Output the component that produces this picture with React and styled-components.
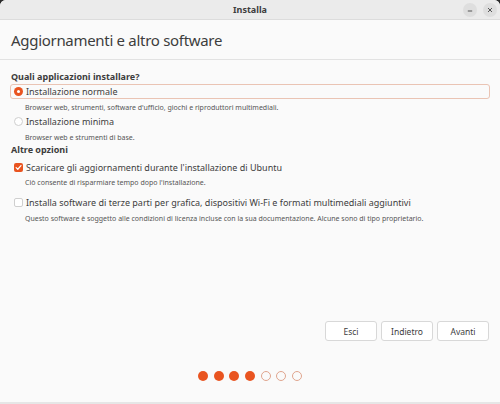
import React from "react";
import styled, { createGlobalStyle } from "styled-components";

const GlobalStyle = createGlobalStyle`
  html, body {
    margin: 0;
    padding: 0;
    background: #2b2b2b;
  }
  body {
    font-family: "Noto Sans", "Open Sans", sans-serif;
    color: #3d3d3d;
  }
`;

const Window = styled.div`
  width: 500px;
  height: 404px;
  background: #fafafa;
  border-radius: 6px 6px 0 0;
  overflow: hidden;
  display: flex;
  flex-direction: column;
`;

const TitleBar = styled.div`
  height: 19px;
  flex: none;
  background: #ebebeb;
  border-bottom: 1px solid #dcdcdc;
  display: flex;
  align-items: center;
  justify-content: center;
  position: relative;
  font-size: 9px;
  font-weight: 700;
  color: #3d3d3d;
`;

const WinButtons = styled.div`
  position: absolute;
  right: 3px;
  top: 3px;
  display: flex;
  gap: 6px;
`;

const WinButton = styled.div`
  width: 14px;
  height: 14px;
  border-radius: 50%;
  background: #dedede;
  display: flex;
  align-items: center;
  justify-content: center;
`;

const Header = styled.div`
  height: 39px;
  flex: none;
  border-bottom: 1px solid #e2e2e2;
  display: flex;
  align-items: center;
  padding-left: 11px;
  font-size: 15px;
  letter-spacing: -0.3px;
  color: #3d3d3d;
`;

const Body = styled.div`
  flex: 1;
  display: flex;
  flex-direction: column;
  padding: 10px 10px 0 10px;
`;

const SectionTitle = styled.div`
  font-size: 9px;
  font-weight: 700;
  height: ${(p) => p.$h || 14}px;
  line-height: ${(p) => p.$h || 14}px;
  padding-left: 1px;
`;

const OptionRow = styled.div`
  display: flex;
  align-items: center;
  gap: 3px;
  height: 15px;
  margin-top: ${(p) => p.$mt || 0}px;
  padding-left: 3px;
  border: 1px solid ${(p) => (p.$focused ? "#eac4b4" : "transparent")};
  border-radius: 3px;
  box-sizing: border-box;
  font-size: 9px;
  color: #3d3d3d;
`;

const Radio = styled.span`
  width: 9px;
  height: 9px;
  border-radius: 50%;
  box-sizing: border-box;
  flex: none;
  background: ${(p) => (p.$on ? "#e95420" : "#fff")};
  border: ${(p) => (p.$on ? "none" : "1px solid #cfcfcf")};
  display: flex;
  align-items: center;
  justify-content: center;
  &::after {
    content: "";
    display: ${(p) => (p.$on ? "block" : "none")};
    width: 3px;
    height: 3px;
    border-radius: 50%;
    background: #fff;
  }
`;

const Check = styled.span`
  width: 9px;
  height: 9px;
  border-radius: 2px;
  box-sizing: border-box;
  flex: none;
  background: ${(p) => (p.$on ? "#e95420" : "#fff")};
  border: ${(p) => (p.$on ? "none" : "1px solid #cfcfcf")};
  display: flex;
  align-items: center;
  justify-content: center;
`;

const Desc = styled.div`
  box-sizing: border-box;
  font-size: 7px;
  color: #555;
  padding: 2px 0 0 15px;
  height: ${(p) => p.$h || 15}px;
  line-height: ${(p) => (p.$h || 15) - 2}px;
  white-space: nowrap;
`;

const Spacer = styled.div`
  flex: 1;
`;

const ButtonRow = styled.div`
  display: flex;
  justify-content: flex-end;
  gap: 4px;
  padding-right: 1px;
`;

const Button = styled.button`
  width: 52px;
  height: 20px;
  border: 1px solid #d8d8d8;
  border-radius: 3px;
  background: #fff;
  font-family: inherit;
  font-size: 8.5px;
  color: #3d3d3d;
  padding: 0;
`;

const Dots = styled.div`
  display: flex;
  justify-content: center;
  gap: 5.6px;
  margin-top: 30px;
  margin-bottom: 21px;
`;

const Dot = styled.span`
  width: 10px;
  height: 10px;
  border-radius: 50%;
  box-sizing: border-box;
  background: ${(p) => (p.$on ? "#e95420" : "transparent")};
  border: ${(p) => (p.$on ? "none" : "1px solid #e0a58e")};
`;

const BottomLine = styled.div`
  height: 2px;
  background: #e6e6e6;
  flex: none;
`;

const CheckMark = () => (
  <svg width="7" height="7" viewBox="0 0 8 8">
    <path
      d="M1.3 4.2 L3.2 6 L6.8 1.8"
      fill="none"
      stroke="#fff"
      strokeWidth="1.4"
      strokeLinecap="round"
      strokeLinejoin="round"
    />
  </svg>
);

export default function App() {
  const steps = [true, true, true, true, false, false, false];
  return (
    <>
      <GlobalStyle />
      <Window>
        <TitleBar>
          Installa
          <WinButtons>
            <WinButton>
              <svg width="6" height="6" viewBox="0 0 6 6">
                <path d="M0.8 4 H5.2" stroke="#555" strokeWidth="1" />
              </svg>
            </WinButton>
            <WinButton>
              <svg width="6" height="6" viewBox="0 0 6 6">
                <path d="M1 1 L5 5 M5 1 L1 5" stroke="#555" strokeWidth="1" />
              </svg>
            </WinButton>
          </WinButtons>
        </TitleBar>
        <Header>Aggiornamenti e altro software</Header>
        <Body>
          <SectionTitle>Quali applicazioni installare?</SectionTitle>
          <OptionRow $focused>
            <Radio $on />
            Installazione normale
          </OptionRow>
          <Desc>Browser web, strumenti, software d'ufficio, giochi e riproduttori multimediali.</Desc>
          <OptionRow>
            <Radio />
            Installazione minima
          </OptionRow>
          <Desc>Browser web e strumenti di base.</Desc>
          <SectionTitle $h={11}>Altre opzioni</SectionTitle>
          <OptionRow $mt={5}>
            <Check $on>
              <CheckMark />
            </Check>
            Scaricare gli aggiornamenti durante l'installazione di Ubuntu
          </OptionRow>
          <Desc $h={14}>Ciò consente di risparmiare tempo dopo l'installazione.</Desc>
          <OptionRow $mt={6}>
            <Check />
            Installa software di terze parti per grafica, dispositivi Wi-Fi e formati multimediali aggiuntivi
          </OptionRow>
          <Desc>
            Questo software è soggetto alle condizioni di licenza incluse con la sua documentazione. Alcune sono di tipo proprietario.
          </Desc>
          <Spacer />
          <ButtonRow>
            <Button>Esci</Button>
            <Button>Indietro</Button>
            <Button>Avanti</Button>
          </ButtonRow>
          <Dots>
            {steps.map((on, i) => (
              <Dot key={i} $on={on} />
            ))}
          </Dots>
        </Body>
        <BottomLine />
      </Window>
    </>
  );
}
